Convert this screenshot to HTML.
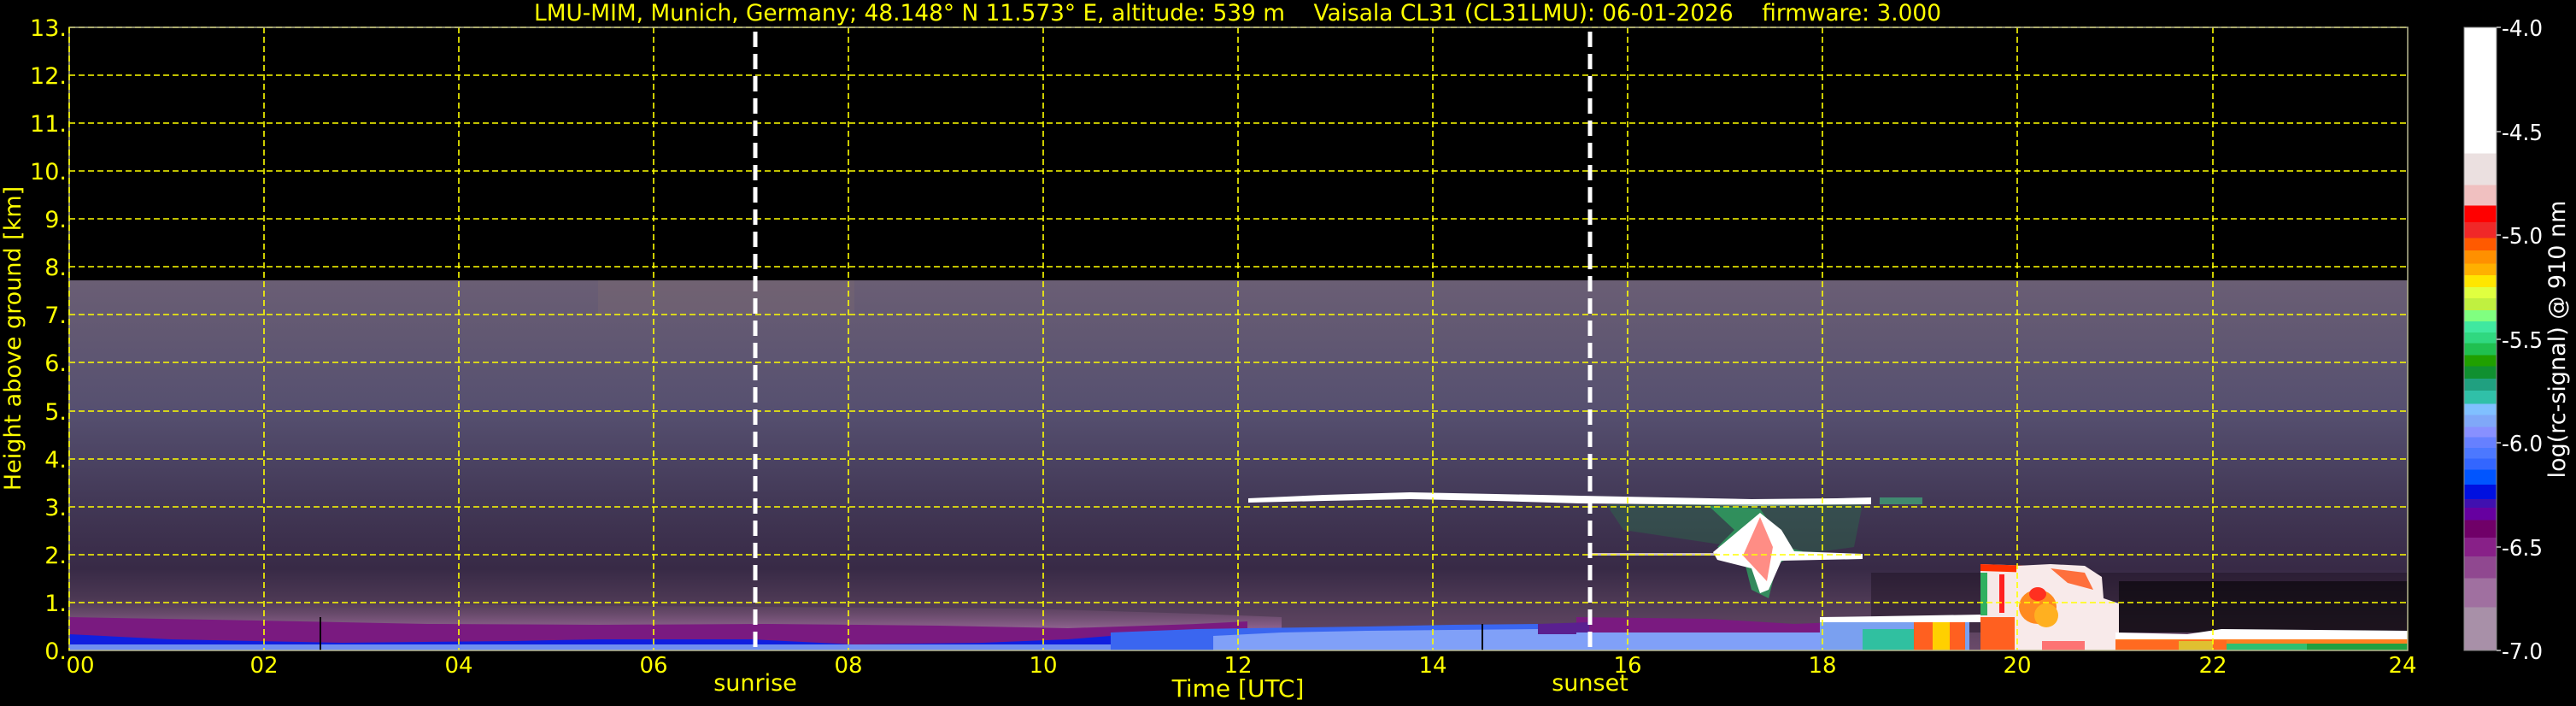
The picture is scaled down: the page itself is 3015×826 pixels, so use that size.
<!DOCTYPE html>
<html><head><meta charset="utf-8"><style>
html,body{margin:0;padding:0;background:#000;width:3015px;height:826px;overflow:hidden}
svg{display:block}
text{font-family:"DejaVu Sans","Liberation Sans",sans-serif;white-space:pre}
</style></head><body>
<svg width="3015" height="826" viewBox="0 0 3015 826" xmlns="http://www.w3.org/2000/svg" xml:space="preserve">
<defs>
<linearGradient id="noise" x1="0" y1="0" x2="0" y2="1">
<stop offset="0" stop-color="#6a5e74"/>
<stop offset="0.35" stop-color="#565070"/>
<stop offset="0.6" stop-color="#423856"/>
<stop offset="0.78" stop-color="#382a46"/>
<stop offset="0.9" stop-color="#553f5a"/>
<stop offset="1" stop-color="#6a4a6a"/>
</linearGradient>
<linearGradient id="cb" x1="0" y1="0" x2="0" y2="1">
<stop offset="0" stop-color="#fff"/><stop offset=".202" stop-color="#fff"/>
<stop offset=".202" stop-color="#ebe0e0"/><stop offset=".253" stop-color="#ebe0e0"/>
<stop offset=".253" stop-color="#f0c0c0"/><stop offset=".286" stop-color="#f0c0c0"/>
<stop offset=".286" stop-color="#ff0000"/><stop offset=".313" stop-color="#ff0000"/>
<stop offset=".313" stop-color="#f02828"/><stop offset=".338" stop-color="#f02828"/>
<stop offset=".338" stop-color="#ff5a00"/><stop offset=".358" stop-color="#ff5a00"/>
<stop offset=".358" stop-color="#ff9000"/><stop offset=".379" stop-color="#ff9000"/>
<stop offset=".379" stop-color="#ffb000"/><stop offset=".398" stop-color="#ffb000"/>
<stop offset=".398" stop-color="#ffe600"/><stop offset=".417" stop-color="#ffe600"/>
<stop offset=".417" stop-color="#e0ff40"/><stop offset=".435" stop-color="#e0ff40"/>
<stop offset=".435" stop-color="#c0f040"/><stop offset=".454" stop-color="#c0f040"/>
<stop offset=".454" stop-color="#80ff80"/><stop offset=".472" stop-color="#80ff80"/>
<stop offset=".472" stop-color="#40e8a0"/><stop offset=".49" stop-color="#40e8a0"/>
<stop offset=".49" stop-color="#30d880"/><stop offset=".507" stop-color="#30d880"/>
<stop offset=".507" stop-color="#20c050"/><stop offset=".526" stop-color="#20c050"/>
<stop offset=".526" stop-color="#20a000"/><stop offset=".544" stop-color="#20a000"/>
<stop offset=".544" stop-color="#109030"/><stop offset=".564" stop-color="#109030"/>
<stop offset=".564" stop-color="#20a080"/><stop offset=".583" stop-color="#20a080"/>
<stop offset=".583" stop-color="#30c0a8"/><stop offset=".604" stop-color="#30c0a8"/>
<stop offset=".604" stop-color="#80c0ff"/><stop offset=".622" stop-color="#80c0ff"/>
<stop offset=".622" stop-color="#80a8f8"/><stop offset=".641" stop-color="#80a8f8"/>
<stop offset=".641" stop-color="#8890ff"/><stop offset=".658" stop-color="#8890ff"/>
<stop offset=".658" stop-color="#6680ff"/><stop offset=".675" stop-color="#6680ff"/>
<stop offset=".675" stop-color="#4c78ff"/><stop offset=".692" stop-color="#4c78ff"/>
<stop offset=".692" stop-color="#3366ff"/><stop offset=".71" stop-color="#3366ff"/>
<stop offset=".71" stop-color="#0055ff"/><stop offset=".734" stop-color="#0055ff"/>
<stop offset=".734" stop-color="#0010e0"/><stop offset=".757" stop-color="#0010e0"/>
<stop offset=".757" stop-color="#4010b0"/><stop offset=".771" stop-color="#4010b0"/>
<stop offset=".771" stop-color="#6600a0"/><stop offset=".791" stop-color="#6600a0"/>
<stop offset=".791" stop-color="#700068"/><stop offset=".819" stop-color="#700068"/>
<stop offset=".819" stop-color="#882088"/><stop offset=".849" stop-color="#882088"/>
<stop offset=".849" stop-color="#904890"/><stop offset=".884" stop-color="#904890"/>
<stop offset=".884" stop-color="#a070a0"/><stop offset=".931" stop-color="#a070a0"/>
<stop offset=".931" stop-color="#a890a8"/><stop offset="1" stop-color="#a890a8"/>
</linearGradient>
<linearGradient id="blfringe" x1="0" y1="0" x2="0" y2="1">
<stop offset="0" stop-color="#6a4a6a" stop-opacity="0"/>
<stop offset="1" stop-color="#9a6a9a"/>
</linearGradient>
</defs>

<rect x="81" y="328" width="2737" height="433" fill="url(#noise)"/>
<rect x="700" y="328" width="300" height="40" fill="#7a6870" opacity="0.4"/>
<polygon points="2190,670 2818,670 2818,740 2190,740" fill="#1a1020" opacity="0.45"/>
<polygon points="2480,680 2818,680 2818,740 2480,740" fill="#000" opacity="0.55"/>

<polygon points="81,700 300,705 600,708 900,710 1200,712 1400,718 1500,722 1500,740 81,740" fill="url(#blfringe)"/>
<polygon points="81,722 300,726 500,730 700,731 900,730 1100,732 1250,735 1400,730 1460,727 1460,761 81,761" fill="#7a1a80"/>
<polygon points="81,742 200,748 400,752 600,750 700,748 880,748 1000,754 1150,752 1250,748 1350,740 1440,736 1460,736 1460,761 81,761" fill="#1020e0"/>
<rect x="81" y="754" width="1400" height="7" fill="#7090f0"/>
<polygon points="1300,740 1400,736 1460,735 1600,733 1700,731 1800,730 1900,730 1900,761 1300,761" fill="#3a66f0"/>
<polygon points="1420,744 1500,740 1600,738 1700,737 1800,736 1900,738 1900,761 1420,761" fill="#80a0f8"/>
<polygon points="1845,722 2000,724 2100,730 2150,728 2200,726 2200,740 1845,740" fill="#7a1a80"/>
<polygon points="1800,730 1860,728 1860,742 1800,742" fill="#5a2090"/>
<polygon points="1845,740 2200,740 2200,761 1845,761" fill="#80a0f8"/>
<polygon points="2130,722 2200,721 2320,719 2320,728 2130,728" fill="#fff"/>
<rect x="2130" y="728" width="175" height="33" fill="#7aa0f0"/>
<rect x="2180" y="736" width="60" height="25" fill="#30c0a0"/>
<rect x="2240" y="728" width="60" height="33" fill="#ff6020"/>
<rect x="2262" y="728" width="20" height="33" fill="#ffd000"/>
<polygon points="2318,660 2380,662 2430,664 2440,670 2440,761 2318,761" fill="#f6e8e8"/>
<polygon points="2318,660 2440,664 2440,672 2318,668" fill="#ff3000"/>
<rect x="2318" y="670" width="8" height="50" fill="#30b060"/>
<rect x="2340" y="672" width="6" height="45" fill="#ff2020"/>
<rect x="2360" y="672" width="5" height="45" fill="#ff5000"/>
<rect x="2385" y="672" width="5" height="48" fill="#ff3030"/>
<rect x="2318" y="722" width="40" height="39" fill="#ff6020"/>
<polygon points="2360,662 2400,660 2440,662 2460,675 2462,700 2480,706 2480,761 2360,761" fill="#f8eaea"/>
<ellipse cx="2385" cy="710" rx="22" ry="20" fill="#ff8a20"/>
<ellipse cx="2395" cy="720" rx="14" ry="14" fill="#ffb020"/>
<ellipse cx="2385" cy="695" rx="10" ry="8" fill="#ff3020"/>
<rect x="2390" y="750" width="50" height="11" fill="#ff4040" opacity="0.7"/>
<polygon points="2400,665 2440,670 2450,690 2420,682" fill="#ff5010" opacity="0.8"/>
<polygon points="2476,740 2560,742 2600,736 2818,738 2818,748 2476,748" fill="#fff"/>
<rect x="2476" y="748" width="342" height="5" fill="#ff8020"/>
<rect x="2476" y="749" width="130" height="12" fill="#ff6a20"/>
<rect x="2606" y="753" width="212" height="8" fill="#30c070"/>
<rect x="2700" y="753" width="118" height="8" fill="#20a040"/>
<rect x="2550" y="750" width="40" height="11" fill="#e0c030"/>

<polygon points="1461,583 1550,579 1650,576 1750,578 1850,580 1950,582 2050,584 2150,583 2190,582 2190,590 2050,592 1950,590 1850,589 1750,586 1650,584 1550,586 1461,588" fill="#fff"/>
<polygon points="1880,590 2180,590 2170,640 2100,650 1900,620" fill="#2a6a4a" opacity="0.45"/>
<polygon points="2000,592 2060,595 2090,640 2110,645 2080,660 2070,700 2050,690 2040,650 2010,640 2030,620" fill="#30a060" opacity="0.8"/>
<polygon points="2005,646 2060,600 2085,620 2100,645 2180,648 2180,654 2085,656 2070,690 2060,694 2050,665 2010,655" fill="#fff"/>
<polygon points="2040,650 2060,605 2075,640 2068,680" fill="#ff3020" opacity="0.55"/>
<rect x="1860" y="647" width="150" height="3" fill="#f0e0e0" opacity="0.8"/>
<rect x="2200" y="582" width="50" height="8" fill="#40c080" opacity="0.6"/>
<rect x="1734" y="730" width="2" height="31" fill="#000"/>
<rect x="374" y="722" width="2" height="39" fill="#000"/>

<g stroke="#ffff00" stroke-width="1.6" stroke-dasharray="7,4" fill="none">
<line x1="81" y1="705" x2="2818" y2="705"/><line x1="81" y1="649" x2="2818" y2="649"/>
<line x1="81" y1="593" x2="2818" y2="593"/><line x1="81" y1="537" x2="2818" y2="537"/>
<line x1="81" y1="481" x2="2818" y2="481"/><line x1="81" y1="424" x2="2818" y2="424"/>
<line x1="81" y1="368" x2="2818" y2="368"/><line x1="81" y1="312" x2="2818" y2="312"/>
<line x1="81" y1="256" x2="2818" y2="256"/><line x1="81" y1="200" x2="2818" y2="200"/>
<line x1="81" y1="144" x2="2818" y2="144"/><line x1="81" y1="88" x2="2818" y2="88"/>
<line x1="81" y1="32" x2="2818" y2="32"/>
<line x1="309" y1="32" x2="309" y2="761"/><line x1="537" y1="32" x2="537" y2="761"/>
<line x1="765" y1="32" x2="765" y2="761"/><line x1="993" y1="32" x2="993" y2="761"/>
<line x1="1221" y1="32" x2="1221" y2="761"/><line x1="1449" y1="32" x2="1449" y2="761"/>
<line x1="1677" y1="32" x2="1677" y2="761"/><line x1="1905" y1="32" x2="1905" y2="761"/>
<line x1="2133" y1="32" x2="2133" y2="761"/><line x1="2361" y1="32" x2="2361" y2="761"/>
<line x1="2590" y1="32" x2="2590" y2="761"/>
</g>
<g stroke="#fff" stroke-width="5" stroke-dasharray="18,8">
<line x1="884" y1="37" x2="884" y2="761"/>
<line x1="1861" y1="37" x2="1861" y2="761"/>
</g>
<rect x="81" y="32" width="2737" height="729" fill="none" stroke="#b8b890" stroke-width="1.5"/>
<line x1="81" y1="32" x2="81" y2="761" stroke="#ffff00" stroke-width="1.6" stroke-dasharray="7,4"/>

<text x="625" y="24" font-size="27" fill="#ffff00" textLength="1647" lengthAdjust="spacingAndGlyphs">LMU-MIM, Munich, Germany; 48.148° N 11.573° E, altitude: 539 m    Vaisala CL31 (CL31LMU): 06-01-2026    firmware: 3.000</text>

<g font-size="27" fill="#ffff00" text-anchor="end">
<text x="78" y="42">13.</text><text x="78" y="98">12.</text><text x="78" y="154">11.</text>
<text x="78" y="210">10.</text><text x="78" y="266">9.</text><text x="78" y="322">8.</text>
<text x="78" y="378">7.</text><text x="78" y="434">6.</text><text x="78" y="491">5.</text>
<text x="78" y="547">4.</text><text x="78" y="603">3.</text><text x="78" y="659">2.</text>
<text x="78" y="715">1.</text><text x="78" y="771">0.</text>
</g>
<text transform="translate(24,396) rotate(-90)" font-size="27" fill="#ffff00" text-anchor="middle">Height above ground [km]</text>

<g font-size="26" fill="#ffff00" text-anchor="middle">
<text x="94" y="787">00</text><text x="309" y="787">02</text><text x="537" y="787">04</text>
<text x="765" y="787">06</text><text x="993" y="787">08</text><text x="1221" y="787">10</text>
<text x="1449" y="787">12</text><text x="1677" y="787">14</text><text x="1905" y="787">16</text>
<text x="2133" y="787">18</text><text x="2361" y="787">20</text><text x="2590" y="787">22</text>
<text x="2812" y="787">24</text>
</g>
<text x="884" y="808" font-size="27" fill="#ffff00" text-anchor="middle">sunrise</text>
<text x="1861" y="808" font-size="27" fill="#ffff00" text-anchor="middle">sunset</text>
<text x="1449" y="815" font-size="28" fill="#ffff00" text-anchor="middle">Time [UTC]</text>

<rect x="2884" y="32" width="38" height="729" fill="url(#cb)" stroke="#888" stroke-width="1"/>
<g stroke="#ccc" stroke-width="1.5">
<line x1="2922" y1="32" x2="2927" y2="32"/><line x1="2922" y1="154" x2="2927" y2="154"/>
<line x1="2922" y1="275" x2="2927" y2="275"/><line x1="2922" y1="397" x2="2927" y2="397"/>
<line x1="2922" y1="518" x2="2927" y2="518"/><line x1="2922" y1="640" x2="2927" y2="640"/>
<line x1="2922" y1="761" x2="2927" y2="761"/>
</g>
<g font-size="26" fill="#fff">
<text x="2928" y="42" textLength="48" lengthAdjust="spacingAndGlyphs">-4.0</text>
<text x="2928" y="164" textLength="48" lengthAdjust="spacingAndGlyphs">-4.5</text>
<text x="2928" y="285" textLength="48" lengthAdjust="spacingAndGlyphs">-5.0</text>
<text x="2928" y="407" textLength="48" lengthAdjust="spacingAndGlyphs">-5.5</text>
<text x="2928" y="528" textLength="48" lengthAdjust="spacingAndGlyphs">-6.0</text>
<text x="2928" y="650" textLength="48" lengthAdjust="spacingAndGlyphs">-6.5</text>
<text x="2928" y="771" textLength="48" lengthAdjust="spacingAndGlyphs">-7.0</text>
</g>
<text transform="translate(3002,397) rotate(-90)" font-size="27" fill="#fff" text-anchor="middle">log(rc-signal) @ 910 nm</text>
</svg>
</body></html>
